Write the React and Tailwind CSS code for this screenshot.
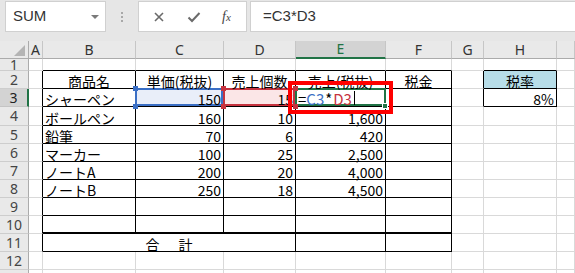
import React from 'react';

// column template shared by header row and all sheet rows
const GRID = 'grid grid-cols-[29px_14px_93px_88px_72px_90px_66px_32px_73px_18px]';
const LETTERS = ['A', 'B', 'C', 'D', 'E', 'F', 'G', 'H', ''];

const data = {
    2: { 2: ['商品名', 'c'], 3: ['単価(税抜)', 'c'], 4: ['売上個数', 'c'], 5: ['売上(税抜)', 'c'], 6: ['税金', 'c'], 8: ['税率', 'c'] },
    3: { 2: ['シャーペン', 'l'], 3: ['150', 'r'], 4: ['15', 'r'], 8: ['8%', 'r'] },
    4: { 2: ['ボールペン', 'l'], 3: ['160', 'r'], 4: ['10', 'r'], 5: ['1,600', 'r'] },
    5: { 2: ['鉛筆', 'l'], 3: ['70', 'r'], 4: ['6', 'r'], 5: ['420', 'r'] },
    6: { 2: ['マーカー', 'l'], 3: ['100', 'r'], 4: ['25', 'r'], 5: ['2,500', 'r'] },
    7: { 2: ['ノートA', 'l'], 3: ['200', 'r'], 4: ['20', 'r'], 5: ['4,000', 'r'] },
    8: { 2: ['ノートB', 'l'], 3: ['250', 'r'], 4: ['18', 'r'], 5: ['4,500', 'r'] },
};

const rowHeights = {
    1: 'h-[12px]',
    4: 'h-[19px]',
    13: 'h-[4px]',
};

const borderRight = (r, c) => {
    const inTable = r >= 2 && r <= 11 && c >= 1 && c <= 6;
    const inRate = r >= 2 && r <= 3 && (c === 7 || c === 8);
    return inTable || inRate ? 'border-r-black' : 'border-r-[#d9d9d9]';
};

const borderBottom = (r, c) => {
    if (r === 10 && c >= 2 && c <= 6) return 'border-b-2 border-b-black';
    const inTable = r >= 1 && r <= 11 && c >= 2 && c <= 6;
    const inRate = r >= 1 && r <= 3 && c === 8;
    return inTable || inRate ? 'border-b border-b-black' : 'border-b border-b-[#d9d9d9]';
};

const alignClass = {
    l: 'justify-start pl-[2px]',
    c: 'justify-center',
    r: 'justify-end pr-[2px]',
};

const Handle = ({ className }) => (
    <div className={`absolute w-[5px] h-[5px] z-20 ${className}`}></div>
);

const RangeBox = ({ color, fill }) => (
    <div className={`absolute -left-[1px] -top-[1px] right-0 bottom-0 border-2 ${color} ${fill}`}></div>
);

const Cell = ({ r, c }) => {
    const content = data[r]?.[c];
    let bg = '';
    if (r === 2 && c === 8) bg = 'bg-[#b7dde8]';

    return (
        <div
            className={`relative flex items-end border-r ${borderRight(r, c)} ${borderBottom(r, c)} ${bg} ${content ? alignClass[content[1]] : ''}`}
        >
            {/* C3: first reference (blue) */}
            {r === 3 && c === 3 && (
                <>
                    <RangeBox color="border-[#3b6fc5]" fill="bg-[#e9eef9]" />
                    <Handle className="-left-[3px] -top-[3px] bg-[#3b6fc5]" />
                    <Handle className="-left-[3px] -bottom-[3px] bg-[#3b6fc5]" />
                </>
            )}
            {/* D3: second reference (red) */}
            {r === 3 && c === 4 && (
                <>
                    <RangeBox color="border-[#c6333f]" fill="bg-[#fbe6e7]" />
                    <Handle className="-left-[3px] -top-[3px] bg-[#c6333f]" />
                    <Handle className="-left-[3px] -bottom-[3px] bg-[#c6333f]" />
                    <Handle className="-right-[3px] -top-[3px] bg-[#c6333f]" />
                    <Handle className="-right-[3px] -bottom-[3px] bg-[#c6333f]" />
                </>
            )}
            {/* E3: cell in edit mode */}
            {r === 3 && c === 5 && (
                <>
                    <div className="absolute -left-[1px] -top-[1px] -right-[1px] bottom-0 border-2 border-[#217346] bg-white"></div>
                    <div className="absolute -right-[3px] -bottom-[3px] w-[6px] h-[6px] bg-[#217346] border border-white z-20"></div>
                    <div className="relative z-10 flex items-end pl-[2px] text-[15px] leading-none">
                        <span>=</span>
                        <span className="text-[#3b6fc5]">C3</span>
                        <span className="mx-[1px]">*</span>
                        <span className="text-[#c6333f]">D3</span>
                        <span className="ml-[2px] w-px h-[14px] bg-black mb-[1px]"></span>
                    </div>
                    <div className="absolute -left-[8px] -top-[8px] -right-[8px] -bottom-[8px] border-4 border-[#ff0000] z-30"></div>
                </>
            )}
            {content && <span className="relative z-10 leading-none whitespace-nowrap">{content[0]}</span>}
        </div>
    );
};

const RowHeader = ({ r }) => (
    <div
        className={`flex items-center justify-center border-r border-b text-[14px] leading-[12px] font-['Noto_Sans',sans-serif] overflow-hidden ${r === 3
            ? 'bg-[#d3d3d3] text-[#222] border-r-2 border-r-[#217346] border-b-[#c4c4c4]'
            : 'bg-[#e9e9e9] text-[#444] border-r-[#ababab] border-b-[#cdcdcd]'
            }`}
    >
        {r < 13 ? r : ''}
    </div>
);

const SheetRow = ({ r }) => {
    const cols = [1, 2, 3, 4, 5, 6, 7, 8, 9];
    return (
        <div className={`${GRID} ${rowHeights[r] || 'h-[18px]'}`}>
            <RowHeader r={r} />
            {r === 11 ? (
                <>
                    <Cell r={r} c={1} />
                    <div className="flex items-end justify-center border-r border-r-black border-b border-b-black col-span-3 leading-none">
                        <span>合</span>
                        <span className="ml-[19px]">計</span>
                    </div>
                    {[5, 6, 7, 8, 9].map((c) => <Cell key={c} r={r} c={c} />)}
                </>
            ) : (
                cols.map((c) => <Cell key={c} r={r} c={c} />)
            )}
        </div>
    );
};

export default function App() {
    return (
        <div className="w-[575px] h-[273px] overflow-hidden bg-white font-['Liberation_Sans',sans-serif]">
            {/* Name box + formula bar */}
            <div className="h-[41px] bg-[#e6e6e6] flex items-start pt-[1px]">
                <div className="ml-[5px] w-[101px] h-[31px] bg-white border border-[#d0d0d0] flex items-center justify-between pl-[7px] pr-[6px]">
                    <span className="text-[15px] text-[#333]">SUM</span>
                    <span className="w-0 h-0 border-l-[4px] border-r-[4px] border-t-[4px] border-l-transparent border-r-transparent border-t-[#7a7a7a]"></span>
                </div>
                <div className="w-[32px] h-[31px] flex flex-col items-center justify-center gap-[2px]">
                    <span className="w-[2px] h-[2px] bg-[#a8a8a8]"></span>
                    <span className="w-[2px] h-[2px] bg-[#a8a8a8]"></span>
                    <span className="w-[2px] h-[2px] bg-[#a8a8a8]"></span>
                </div>
                <div className="w-[109px] h-[31px] bg-white border border-[#d0d0d0] flex items-center">
                    <svg width="12" height="12" viewBox="0 0 12 12" className="ml-[14px]">
                        <path d="M2 2 L10 10 M10 2 L2 10" stroke="#6a6a6a" strokeWidth="1.6" />
                    </svg>
                    <svg width="14" height="12" viewBox="0 0 14 12" className="ml-[22px]">
                        <path d="M1.5 6.5 L5 10 L12.5 2" stroke="#6a6a6a" strokeWidth="2" fill="none" />
                    </svg>
                    <span className="ml-[21px] text-[14px] italic text-[#444] font-['Liberation_Serif',serif] leading-none">
                        f<span className="text-[11px]">x</span>
                    </span>
                </div>
                <div className="ml-[3px] flex-1 h-[31px] bg-white border border-[#d0d0d0] border-r-0 flex items-center pl-[12px]">
                    <span className="text-[15px] text-[#333]">=C3*D3</span>
                </div>
            </div>

            {/* Column headers */}
            <div className={`${GRID} h-[18px] text-[14px] leading-none font-['Noto_Sans',sans-serif]`}>
                <div className="bg-[#e9e9e9] border-r border-r-[#ababab] border-b border-b-[#ababab] flex items-end justify-end pr-[3px] pb-[2px]">
                    <span className="w-0 h-0 border-l-[11px] border-l-transparent border-b-[11px] border-b-[#b4b4b4]"></span>
                </div>
                {LETTERS.map((l, i) => (
                    <div
                        key={i}
                        className={`flex items-center justify-center border-r border-r-[#c6c6c6] ${l === 'E'
                            ? 'bg-[#d3d3d3] text-[#217346] border-b-2 border-b-[#217346]'
                            : 'bg-[#e9e9e9] text-[#333] border-b border-b-[#ababab]'
                            }`}
                    >
                        {l}
                    </div>
                ))}
            </div>

            {/* Sheet body */}
            <div className="text-[14px] text-black font-['Noto_Sans_CJK_JP',sans-serif]">
                {[1, 2, 3, 4, 5, 6, 7, 8, 9, 10, 11, 12, 13].map((r) => (
                    <SheetRow key={r} r={r} />
                ))}
            </div>
        </div>
    );
}
